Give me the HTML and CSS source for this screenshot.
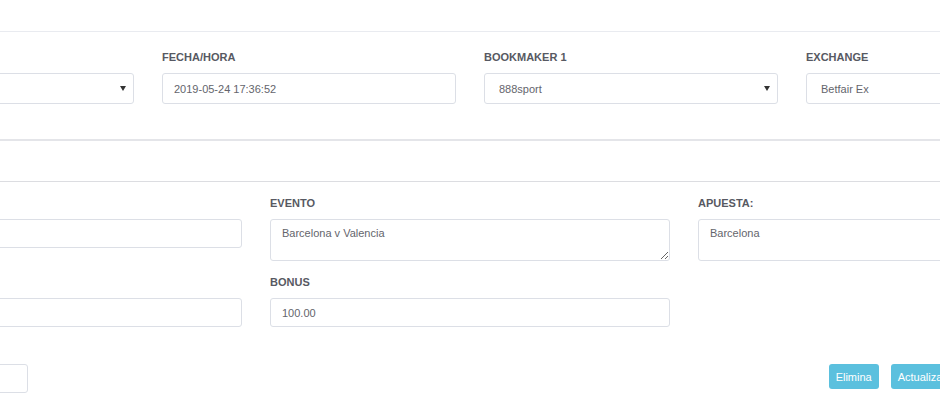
FILE: index.html
```html
<!DOCTYPE html>
<html lang="es">
<head>
    <meta charset="UTF-8">
    <meta name="viewport" content="width=device-width, initial-scale=1.0">
    <title>Editar apuesta</title>
    <link rel="stylesheet" href="styles.css">
</head>
<body>
    <div class="modal">
        <div class="modal-head"></div>

        <div class="sec sec-top">
            <div class="grid4">
                <div class="group">
                    <label></label>
                    <div class="select-wrap">
                        <select class="field">
                            <option></option>
                        </select>
                    </div>
                </div>
                <div class="group">
                    <label>FECHA/HORA</label>
                    <input class="field" type="text" value="2019-05-24 17:36:52">
                </div>
                <div class="group">
                    <label>BOOKMAKER 1</label>
                    <div class="select-wrap">
                        <select class="field">
                            <option>888sport</option>
                        </select>
                    </div>
                </div>
                <div class="group">
                    <label>EXCHANGE</label>
                    <div class="select-wrap">
                        <select class="field">
                            <option>Betfair Ex</option>
                        </select>
                    </div>
                </div>
            </div>
        </div>

        <div class="sec sec-empty"></div>

        <div class="sec sec-main">
            <div class="grid3">
                <div class="group">
                    <label></label>
                    <input class="field small" type="text">
                </div>
                <div class="group">
                    <label>EVENTO</label>
                    <textarea class="field area">Barcelona v Valencia</textarea>
                </div>
                <div class="group">
                    <label>APUESTA:</label>
                    <textarea class="field area">Barcelona</textarea>
                </div>
                <div class="group">
                    <label></label>
                    <input class="field small" type="text">
                </div>
                <div class="group">
                    <label>BONUS</label>
                    <input class="field small" type="text" value="100.00">
                </div>
            </div>

            <div class="actions">
                <input class="field small mini" type="text">
                <div class="buttons">
                    <button class="btn">Elimina</button>
                    <button class="btn">Actualizar</button>
                </div>
            </div>
        </div>
    </div>
</body>
</html>
```

FILE: styles.css
```css
body {
    margin: 0;
    background-color: #fff;
    font-family: "Liberation Sans", Arial, sans-serif;
    overflow: hidden;
}
.modal {
    width: 1260px;
    margin-left: -160px;
}
.modal-head {
    height: 31px;
    border-bottom: 1px solid #e9ebf0;
}
.sec-top {
    padding: 19px 0 35px;
    border-bottom: 2px solid #e4e5e9;
}
.sec-empty {
    height: 40px;
    border-bottom: 1px solid #dcdde1;
}
.sec-main {
    padding: 15px 2px 0;
}
.grid4 {
    display: grid;
    grid-template-columns: repeat(4, 294px);
    column-gap: 28px;
}
.grid3 {
    display: grid;
    grid-template-columns: repeat(3, 400px);
    column-gap: 28px;
    row-gap: 15px;
    align-items: start;
}
.group label {
    display: block;
    height: 13px;
    font-size: 11px;
    line-height: 13px;
    font-weight: bold;
    color: #575962;
    margin-bottom: 9px;
}
.field {
    display: block;
    box-sizing: border-box;
    width: 100%;
    height: 31px;
    margin: 0;
    padding: 0 11px;
    border: 1px solid #dcdfe6;
    border-radius: 3px;
    background-color: #fff;
    font-family: "Liberation Sans", Arial, sans-serif;
    font-size: 11px;
    color: #64656c;
    outline: none;
}
.field.small {
    height: 29px;
}
.area {
    height: 42px;
    padding: 7px 11px;
    resize: vertical;
}
.select-wrap {
    position: relative;
}
.select-wrap select {
    appearance: none;
    -webkit-appearance: none;
    padding-left: 14px;
}
.select-wrap::after {
    content: '';
    position: absolute;
    right: 8px;
    top: 13px;
    border-left: 3px solid transparent;
    border-right: 3px solid transparent;
    border-top: 5px solid #333;
}
.actions {
    display: flex;
    align-items: flex-start;
    margin-top: 37px;
}
.field.mini {
    width: 186px;
}
.buttons {
    display: flex;
    gap: 12px;
    margin-left: auto;
    margin-right: 145px;
}
.btn {
    height: 25px;
    padding: 0 7px;
    border: none;
    border-radius: 3px;
    background-color: #5bc0de;
    color: #fff;
    font-family: "Liberation Sans", Arial, sans-serif;
    font-size: 11px;
    cursor: pointer;
}
```
